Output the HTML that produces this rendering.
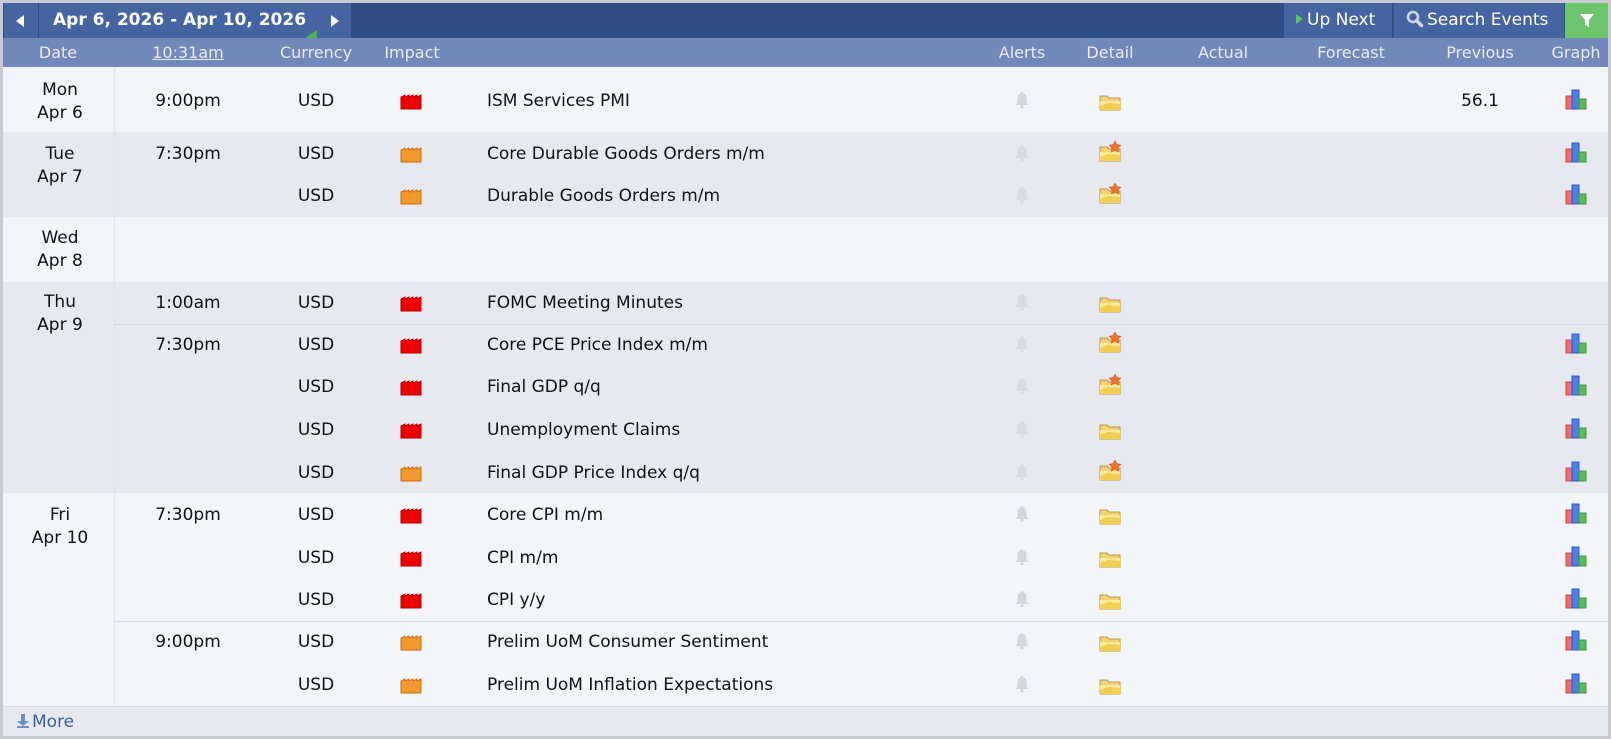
<!DOCTYPE html>
<html><head><meta charset="utf-8"><style>
*{margin:0;padding:0;box-sizing:border-box}
body{width:1611px;height:739px;background:#c9cbd0;font-family:"DejaVu Sans","Liberation Sans",sans-serif;position:relative;overflow:hidden}
#w{position:absolute;left:3px;top:3px;width:1605px;height:733px;background:#f4f5f9}
.a{position:absolute}
.nav{left:0;top:0;width:1605px;height:35px;background:#2e4d82}
.btn{position:absolute;top:0;height:35px;background:#4565a0;color:#fff;font-size:16px;line-height:35px}
.hdr{left:0;top:35px;width:1605px;height:29px;background:#7189b8;color:#e8ecf5;font-size:16px;line-height:29px}
.hdr span{position:absolute;transform:translateX(-50%);white-space:nowrap}
.band{position:absolute;left:0;width:1605px}
.g{background:#e8e9ee}
.l{background:#f4f5f9}
.dc{position:absolute;left:0;width:111px;border-right:1px solid #e0e2e8}
.t{position:absolute;font-size:17px;color:#111;line-height:20px;height:20px;white-space:nowrap}
.c{transform:translateX(-50%)}
.sep{position:absolute;left:111px;width:1494px;height:1px;background:#d8dae0}
svg{position:absolute}
</style></head><body>
<svg width="0" height="0" style="position:absolute">
<defs>
<symbol id="fr" viewBox="0 0 22 18"><path d="M1 17V5l4-2v2l4-2v2l4-2v2l4-2v2l4-2v14z" fill="#e00" stroke="#b00" stroke-width="1"/></symbol>
<symbol id="fo" viewBox="0 0 22 18"><path d="M1 17V5l4-2v2l4-2v2l4-2v2l4-2v2l4-2v14z" fill="#f09a30" stroke="#c96f10" stroke-width="1"/></symbol>
<symbol id="fd" viewBox="0 0 24 20"><path d="M2 4h7l2 2h11v12H2z" fill="#f4d272" stroke="#b8964a"/><path d="M2 9h20v9H2z" fill="#fbe89a"/><path d="M2 14l8-3 12 1v6H2z" fill="#f2cf50"/></symbol>
<symbol id="fs" viewBox="0 0 24 22"><path d="M2 6h7l2 2h11v12H2z" fill="#f4d272" stroke="#b8964a"/><path d="M2 11h20v9H2z" fill="#fbe89a"/><path d="M2 16l8-3 12 1v6H2z" fill="#f2cf50"/><path d="M17 0l1.8 3.6 4 .6-2.9 2.8.7 4-3.6-1.9-3.6 1.9.7-4-2.9-2.8 4-.6z" fill="#f07030" stroke="#d05020" stroke-width=".6"/></symbol>
<symbol id="bl" viewBox="0 0 16 18"><path d="M8 1a1.3 1.3 0 0 1 1.3 1.3C12 3 12.5 5.5 12.5 8v3.5L14.5 14h-13l2-2.5V8c0-2.5.5-5 3.2-5.7A1.3 1.3 0 0 1 8 1z" fill="#d4d6db"/><circle cx="8" cy="15.6" r="1.6" fill="#d4d6db"/></symbol>
<symbol id="gr" viewBox="0 0 24 22"><rect x="2" y="7" width="7" height="13" fill="#ee6b6b" stroke="#c44"/><rect x="8" y="1" width="7" height="19" fill="#4d7fe8" stroke="#2a5bc4"/><rect x="15" y="10" width="7" height="10" fill="#5dbb5d" stroke="#3a9a3a"/></symbol>
</defs></svg>
<div id="w">
<div class="a nav">
 <div class="btn" style="left:1px;width:34px"><span style="position:absolute;left:12px;top:12px;border-right:8px solid #fff;border-top:6px solid transparent;border-bottom:6px solid transparent"></span></div>
 <div class="btn" style="left:36px;width:279px;font-weight:bold;font-size:17px;padding-left:14px">Apr 6, 2026 - Apr 10, 2026</div>
 <div class="a" style="left:302px;top:27px;width:0;height:0;border-left:12px solid transparent;border-bottom:8px solid #4caf50"></div>
 <div class="btn" style="left:315px;width:33px"><span style="position:absolute;left:13px;top:12px;border-left:8px solid #fff;border-top:6px solid transparent;border-bottom:6px solid transparent"></span></div>
 <div class="btn" style="left:1281px;width:108px;padding-left:12px;font-size:17px"><span style="display:inline-block;width:0;height:0;border-left:7px solid #5c5;border-top:5px solid transparent;border-bottom:5px solid transparent;margin-right:4px;vertical-align:1px"></span>Up Next</div>
 <div class="btn" style="left:1390px;width:171px;padding-left:12px;border-left:1px solid #3a5890;font-size:17px"><svg width="18" height="18" style="position:relative;display:inline-block;vertical-align:-3px;margin-right:3px" viewBox="0 0 18 18"><circle cx="7" cy="7" r="5" fill="none" stroke="#cfd8ea" stroke-width="2.5"/><path d="M10.5 10.5l5 5" stroke="#cfd8ea" stroke-width="3.5" stroke-linecap="round"/></svg>Search Events</div>
 <div class="btn" style="left:1562px;width:43px;background:#6cc46c;text-align:center"><svg width="16" height="16" style="left:14px;top:10px" viewBox="0 0 16 16"><path d="M1 1h14l-5 6v7l-4-2V7z" fill="#fff"/></svg></div>
</div>
<div class="a hdr">
 <span style="left:55px">Date</span><span style="left:185px;text-decoration:underline">10:31am</span><span style="left:313px">Currency</span><span style="left:409px">Impact</span>
 <span style="left:1019px">Alerts</span><span style="left:1107px">Detail</span><span style="left:1220px">Actual</span><span style="left:1348px">Forecast</span><span style="left:1477px">Previous</span><span style="left:1573px">Graph</span>
</div>
<div class="band l" style="top:65px;height:64px"></div>
<div class="band g" style="top:129px;height:85px"></div>
<div class="band l" style="top:214px;height:65px"></div>
<div class="band g" style="top:279px;height:211px"></div>
<div class="band l" style="top:490px;height:213px"></div>
<div class="band" style="top:703px;height:30px;background:#e8e9ee;border-top:1px solid #d8dae0"></div>
<div class="a" style="left:0;top:65px;width:111px;height:64px;background:#f4f5f9"></div>
<div class="a" style="left:0;top:129px;width:111px;height:85px;background:#e8e9ee"></div>
<div class="a" style="left:0;top:214px;width:111px;height:65px;background:#f4f5f9"></div>
<div class="a" style="left:0;top:279px;width:111px;height:211px;background:#e8e9ee"></div>
<div class="a" style="left:0;top:490px;width:111px;height:213px;background:#f4f5f9"></div>
<div class="a" style="left:111px;top:65px;width:1px;height:638px;background:#e2e4ea"></div>
<div class="sep" style="top:321px"></div>
<div class="sep" style="top:618px"></div>
<div class="t c" style="left:57px;top:77px">Mon</div><div class="t c" style="left:57px;top:100px">Apr 6</div>
<div class="t c" style="left:57px;top:141px">Tue</div><div class="t c" style="left:57px;top:164px">Apr 7</div>
<div class="t c" style="left:57px;top:225px">Wed</div><div class="t c" style="left:57px;top:248px">Apr 8</div>
<div class="t c" style="left:57px;top:289px">Thu</div><div class="t c" style="left:57px;top:312px">Apr 9</div>
<div class="t c" style="left:57px;top:502px">Fri</div><div class="t c" style="left:57px;top:525px">Apr 10</div>
<div class="t c" style="left:185px;top:88px">9:00pm</div>
<div class="t c" style="left:185px;top:141px">7:30pm</div>
<div class="t c" style="left:185px;top:290px">1:00am</div>
<div class="t c" style="left:185px;top:332px">7:30pm</div>
<div class="t c" style="left:185px;top:502px">7:30pm</div>
<div class="t c" style="left:185px;top:629px">9:00pm</div>
<div id="ev"></div>
<div class="t" style="left:14px;top:709px;color:#3a62a0"><span style="display:inline-block;width:12px;height:14px;position:relative;vertical-align:-1px;margin-right:3px"><span style="position:absolute;left:4px;top:0;width:4px;height:7px;background:#6c8fc4"></span><span style="position:absolute;left:0;top:7px;border-left:6px solid transparent;border-right:6px solid transparent;border-top:5px solid #6c8fc4"></span><span style="position:absolute;left:0;top:12px;width:12px;height:2px;background:#6c8fc4"></span></span>More</div>
</div>
<script>
var rows=[
[98,'r','ISM Services PMI','d',1,'56.1'],
[151,'o','Core Durable Goods Orders m/m','s',0,''],
[193,'o','Durable Goods Orders m/m','s',0,''],
[300,'r','FOMC Meeting Minutes','d',0,''],
[342,'r','Core PCE Price Index m/m','s',0,''],
[384,'r','Final GDP q/q','s',0,''],
[427,'r','Unemployment Claims','d',0,''],
[470,'o','Final GDP Price Index q/q','s',0,''],
[512,'r','Core CPI m/m','d',1,''],
[555,'r','CPI m/m','d',1,''],
[597,'r','CPI y/y','d',1,''],
[639,'o','Prelim UoM Consumer Sentiment','d',1,''],
[682,'o','Prelim UoM Inflation Expectations','d',1,'']];
var h='';
rows.forEach(function(r){var y=r[0];
h+='<div class="t c" style="left:313px;top:'+(y-10)+'px">USD</div>';
h+='<svg width="22" height="18" style="left:397px;top:'+(y-9)+'px"><use href="#f'+r[1]+'"/></svg>';
h+='<div class="t" style="left:484px;top:'+(y-10)+'px">'+r[2]+'</div>';
h+='<svg width="16" height="18" style="left:1011px;top:'+(y-10)+'px;opacity:'+(r[4]?1:.7)+'"><use href="#bl"/></svg>';
h+=r[3]=='d'?'<svg width="24" height="20" style="left:1095px;top:'+(y-9)+'px"><use href="#fd"/></svg>':'<svg width="24" height="22" style="left:1095px;top:'+(y-13)+'px"><use href="#fs"/></svg>';
if(r[5])h+='<div class="t c" style="left:1477px;top:'+(y-10)+'px">'+r[5]+'</div>';
if(y!=300)h+='<svg width="24" height="22" style="left:1561px;top:'+(y-12)+'px"><use href="#gr"/></svg>';
});
document.getElementById('ev').outerHTML=h;
</script>
</body></html>
